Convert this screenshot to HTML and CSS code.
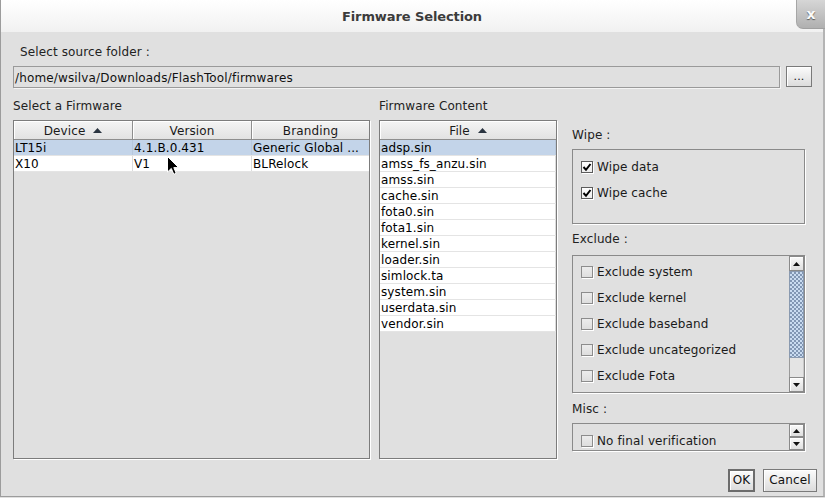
FILE: index.html
```html
<!DOCTYPE html>
<html>
<head>
<meta charset="utf-8">
<title>Firmware Selection</title>
<link rel="stylesheet" href="styles.css">
</head>
<body>
<div class="window">
  <div class="titlebar">
    <div></div>
    <div class="title">Firmware Selection</div>
    <div class="close">x</div>
  </div>
  <div class="content">
    <div class="label src-label">Select source folder :</div>
    <div class="src-row">
      <div class="field">/home/wsilva/Downloads/FlashTool/firmwares</div>
      <div class="btn dots">...</div>
    </div>
    <div class="main">
      <div class="col left">
        <div class="label col-label">Select a Firmware</div>
        <div class="table">
          <div class="thead grid3">
            <div class="th">Device <svg class="sort" width="9" height="5" viewBox="0 0 9 5"><path d="M0 5 L4.5 0 L9 5 Z"/></svg></div>
            <div class="th">Version</div>
            <div class="th last">Branding</div>
          </div>
          <div class="tr grid3 sel"><div class="td">LT15i</div><div class="td">4.1.B.0.431</div><div class="td last">Generic Global ...</div></div>
          <div class="tr grid3"><div class="td">X10</div><div class="td">V1</div><div class="td last">BLRelock</div></div>
        </div>
      </div>
      <div class="col mid">
        <div class="label col-label">Firmware Content</div>
        <div class="table">
          <div class="thead grid1">
            <div class="th last">File <svg class="sort" width="9" height="5" viewBox="0 0 9 5"><path d="M0 5 L4.5 0 L9 5 Z"/></svg></div>
          </div>
          <div class="tr sel"><div class="td">adsp.sin</div></div>
          <div class="tr"><div class="td">amss_fs_anzu.sin</div></div>
          <div class="tr"><div class="td">amss.sin</div></div>
          <div class="tr"><div class="td">cache.sin</div></div>
          <div class="tr"><div class="td">fota0.sin</div></div>
          <div class="tr"><div class="td">fota1.sin</div></div>
          <div class="tr"><div class="td">kernel.sin</div></div>
          <div class="tr"><div class="td">loader.sin</div></div>
          <div class="tr"><div class="td">simlock.ta</div></div>
          <div class="tr"><div class="td">system.sin</div></div>
          <div class="tr"><div class="td">userdata.sin</div></div>
          <div class="tr"><div class="td">vendor.sin</div></div>
        </div>
      </div>
      <div class="col right">
        <div class="label wipe-label">Wipe :</div>
        <div class="box wipe-box">
          <div class="check-row"><span class="cb checked"><svg width="10" height="10" viewBox="0 0 10 10"><path d="M1.5 5 L4 7.8 L8.5 2" fill="none" stroke="#000" stroke-width="2"/></svg></span>Wipe data</div>
          <div class="check-row"><span class="cb checked"><svg width="10" height="10" viewBox="0 0 10 10"><path d="M1.5 5 L4 7.8 L8.5 2" fill="none" stroke="#000" stroke-width="2"/></svg></span>Wipe cache</div>
        </div>
        <div class="label excl-label">Exclude :</div>
        <div class="box scroll-box excl-box">
          <div class="list">
            <div class="check-row"><span class="cb"></span>Exclude system</div>
            <div class="check-row"><span class="cb"></span>Exclude kernel</div>
            <div class="check-row"><span class="cb"></span>Exclude baseband</div>
            <div class="check-row"><span class="cb"></span>Exclude uncategorized</div>
            <div class="check-row"><span class="cb"></span>Exclude Fota</div>
          </div>
          <div class="vscroll">
            <div class="sbtn"><svg width="7" height="4" viewBox="0 0 7 4"><path d="M0 4 L3.5 0 L7 4 Z"/></svg></div>
            <div class="thumb"></div>
            <div class="track"></div>
            <div class="sbtn"><svg width="7" height="4" viewBox="0 0 7 4"><path d="M0 0 L3.5 4 L7 0 Z"/></svg></div>
          </div>
        </div>
        <div class="label misc-label">Misc :</div>
        <div class="box scroll-box misc-box">
          <div class="list">
            <div class="check-row"><span class="cb"></span>No final verification</div>
          </div>
          <div class="vscroll small">
            <div class="sbtn"><svg width="7" height="4" viewBox="0 0 7 4"><path d="M0 4 L3.5 0 L7 4 Z"/></svg></div>
            <div class="sbtn"><svg width="7" height="4" viewBox="0 0 7 4"><path d="M0 0 L3.5 4 L7 0 Z"/></svg></div>
          </div>
        </div>
      </div>
    </div>
    <div class="footer">
      <div class="btn ok">OK</div>
      <div class="btn cancel">Cancel</div>
    </div>
  </div>
  <svg class="cursor" width="13" height="20" viewBox="0 0 13 20"><path d="M0.5 0.5 L0.5 16 L4.3 12.4 L6.8 18.3 L9.2 17.3 L6.8 11.6 L11.6 11.6 Z" fill="#000" stroke="#fff" stroke-width="1"/></svg>
</div>
</body>
</html>
```

FILE: styles.css
```css
* { box-sizing: border-box; }
html, body { margin: 0; padding: 0; }
body {
  width: 825px;
  height: 498px;
  overflow: hidden;
  background: #e0e0e0;
  font-family: "DejaVu Sans", sans-serif;
  font-size: 12px;
  letter-spacing: 0.12px;
  color: #222;
}
.window {
  position: relative;
  width: 825px;
  height: 497px;
  background: #e0e0e0;
  border-left: 1px solid #9c9c9c;
  border-right: 2px solid #b4b4b4;
  border-bottom: 1px solid #9c9c9c;
}
.titlebar {
  height: 32px;
  display: grid;
  grid-template-columns: 1fr auto 1fr;
  align-items: center;
  background: linear-gradient(#ffffff, #f1f1f1);
}
.title {
  font-family: "DejaVu Sans", sans-serif;
  font-weight: bold;
  font-size: 13px;
  color: #3c3c3c;
  letter-spacing: -0.1px;
  padding-top: 1px;
}
.close {
  justify-self: end;
  align-self: start;
  width: 29px;
  height: 29px;
  margin-right: -2px;
  background: linear-gradient(#d6d6d6, #b0b0b0);
  border-left: 1px solid #a6a6a6;
  border-bottom: 1px solid #a0a0a0;
  border-bottom-left-radius: 7px;
  color: #fafafa;
  font-weight: bold;
  font-size: 14px;
  line-height: 28px;
  text-align: center;
  text-shadow: 0 1px 1px #555;
}
.content {
  padding: 13px 0 0 12px;
}
.label {
  line-height: 14px;
  height: 14px;
  white-space: nowrap;
}
.src-label { padding-left: 7px; }
.src-row {
  display: flex;
  margin-top: 7px;
}
.field {
  width: 767px;
  height: 22px;
  border: 1px solid #9a9a9a;
  box-shadow: 1px 1px 0 #f4f4f4;
  padding: 1px 0 0 1px;
  line-height: 20px;
  color: #111;
  white-space: nowrap;
  letter-spacing: 0.15px;
}
.btn {
  border: 1px solid #7a7a7a;
  background: linear-gradient(#fbfbfb, #dcdcdc);
  box-shadow: inset 1px 1px 0 #fff;
  text-align: center;
  color: #111;
}
.dots {
  width: 26px;
  height: 21px;
  margin-left: 6px;
  line-height: 19px;
  font-size: 11px;
}
.main {
  display: flex;
  margin-top: 10px;
}
.left { width: 357px; }
.mid { width: 178px; margin-left: 9px; }
.right { width: 233px; margin-left: 15px; }
.col-label { height: 15px; padding-top: 1px; }
.table {
  margin-top: 7px;
  height: 339px;
  border: 1px solid #7c7c7c;
  box-shadow: 1px 1px 0 #fff;
  background: #e0e0e0;
  overflow: hidden;
}
.grid3 {
  display: grid;
  grid-template-columns: 119px 119px 1fr;
}
.thead {
  height: 19px;
}
.th {
  height: 19px;
  background: linear-gradient(#f4f4f4, #e2e2e2);
  border-right: 1px solid #8e8e8e;
  border-bottom: 1px solid #8e8e8e;
  box-shadow: inset 1px 1px 0 #fff;
  text-align: center;
  line-height: 18px;
  padding-top: 1px;
  color: #1a1a1a;
  white-space: nowrap;
}
.th.last { border-right: none; }
.sort {
  fill: #2a3440;
  margin-left: 4px;
  vertical-align: 2px;
}
.tr {
  height: 16px;
  background: #fff;
  border-bottom: 1px solid #e4e4e4;
}
.tr.sel { background: #c3d4e9; }
.td {
  padding: 1px 0 0 1px;
  line-height: 14px;
  height: 15px;
  color: #000;
  white-space: nowrap;
  overflow: hidden;
  border-right: 1px solid #dcdcdc;
}
.td.last { border-right: none; }
.tr.sel .td { border-right-color: #b8c8dc; }
.box {
  border: 1px solid #8a8a8a;
  box-shadow: 1px 1px 0 #fff;
}
.wipe-label { margin-top: 30px; }
.wipe-box {
  margin-top: 7px;
  height: 75px;
  padding: 4px 0 0 8px;
}
.excl-label { margin-top: 8px; }
.excl-box { margin-top: 9px; height: 138px; }
.misc-label { margin-top: 9px; }
.misc-box { margin-top: 7px; height: 28px; }
.misc-box .list { padding-top: 4px; }
.scroll-box {
  display: flex;
  overflow: hidden;
}
.list {
  flex: 1;
  padding: 3px 0 0 8px;
}
.check-row {
  display: flex;
  align-items: center;
  height: 26px;
  color: #1a1a1a;
  white-space: nowrap;
}
.cb {
  width: 12px;
  height: 12px;
  margin-right: 4px;
  border: 1px solid #8c8c8c;
  background: linear-gradient(#ececec, #dedede);
  box-shadow: 1px 1px 0 #fff;
  display: flex;
  align-items: center;
  justify-content: center;
  flex: none;
}
.cb.checked {
  border-color: #5c5c5c;
  background: linear-gradient(#ffffff, #ececec);
}
.vscroll {
  width: 15px;
  display: flex;
  flex-direction: column;
  background: #e6e6e6;
}
.sbtn {
  height: 15px;
  border: 1px solid #8a8a8a;
  background: linear-gradient(#fafafa, #dedede);
  box-shadow: inset 1px 1px 0 #fff;
  display: flex;
  align-items: center;
  justify-content: center;
  fill: #111;
}
.vscroll.small .sbtn { height: 13px; }
.thumb {
  height: 87px;
  border: 1px solid #8a9ab0;
  background-color: #c9dbf0;
  background-image:
    radial-gradient(circle, #7f94b2 0.7px, transparent 0.9px),
    radial-gradient(circle, #7f94b2 0.7px, transparent 0.9px);
  background-size: 4px 4px, 4px 4px;
  background-position: 1px 1px, 3px 3px;
}
.track {
  height: 19px;
  border-left: 1px solid #9a9a9a;
  border-right: 1px solid #c8c8c8;
  background: #e4e4e4;
}
.footer {
  display: flex;
  justify-content: flex-end;
  margin-top: 10px;
  padding-right: 6px;
}
.ok {
  width: 27px;
  height: 23px;
  border: 2px solid #6c6c6c;
  line-height: 19px;
}
.cancel {
  width: 54px;
  height: 23px;
  margin-left: 8px;
  line-height: 21px;
}
.cursor {
  position: absolute;
  left: 166px;
  top: 156px;
}
```
